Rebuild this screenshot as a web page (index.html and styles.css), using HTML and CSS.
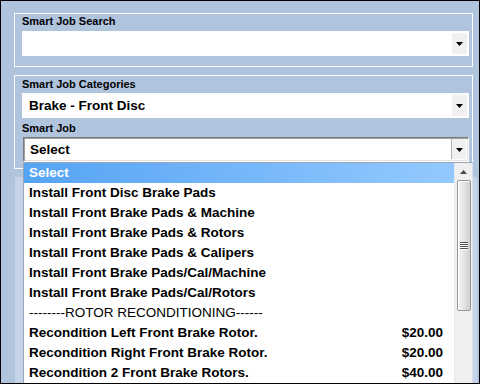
FILE: index.html
```html
<!DOCTYPE html>
<html>
	<head>
		<meta charset="UTF-8">
		<title>Smart Job</title>
		<link rel="stylesheet" href="styles.css">
	</head>
	<body>
		<div class="window">
			<div class="group g1">
				<p class="label">Smart Job Search</p>
				<div class="combo">
					<span class="value"></span>
					<span class="btn"><svg width="7" height="4" viewBox="0 0 7 4"><polygon points="0,0 7,0 3.5,4" fill="#000"/></svg></span>
				</div>
			</div>
			<div class="group g2">
				<p class="label lb1">Smart Job Categories</p>
				<div class="combo">
					<span class="value">Brake - Front Disc</span>
					<span class="btn"><svg width="7" height="4" viewBox="0 0 7 4"><polygon points="0,0 7,0 3.5,4" fill="#000"/></svg></span>
				</div>
				<p class="label lb2">Smart Job</p>
				<div class="combo open">
					<span class="value">Select</span>
					<span class="btn"><svg width="7" height="4" viewBox="0 0 7 4"><polygon points="0,0 7,0 3.5,4" fill="#000"/></svg></span>
				</div>
			</div>
			<div class="panel"></div>

			<!-- dropdown of the Smart Job combo, drawn over the panel -->
			<div class="droplist">
				<ul class="items">
					<li class="sel">Select</li>
					<li>Install Front Disc Brake Pads</li>
					<li>Install Front Brake Pads &amp; Machine</li>
					<li>Install Front Brake Pads &amp; Rotors</li>
					<li>Install Front Brake Pads &amp; Calipers</li>
					<li>Install Front Brake Pads/Cal/Machine</li>
					<li>Install Front Brake Pads/Cal/Rotors</li>
					<li class="sep">--------ROTOR RECONDITIONING------</li>
					<li><span>Recondition Left Front Brake Rotor.</span><span>$20.00</span></li>
					<li><span>Recondition Right Front Brake Rotor.</span><span>$20.00</span></li>
					<li><span>Recondition 2 Front Brake Rotors.</span><span>$40.00</span></li>
				</ul>
				<div class="scroll">
					<div class="up"><svg width="7" height="4" viewBox="0 0 7 4"><polygon points="0,4 7,4 3.5,0" fill="#4a4a4a"/></svg></div>
					<div class="thumb">
						<div class="grip"><i></i><i></i><i></i><i></i></div>
					</div>
				</div>
			</div>
		</div>
	</body>
</html>
```

FILE: styles.css
```css
body{
	margin: 0;
	font-family: "Liberation Sans", Arial, sans-serif;
}
p{
	margin: 0;
}
ul,li{
	padding: 0;
	margin: 0;
	list-style: none;
}
.window{
	position: relative;
	width: 480px;
	height: 384px;
	box-sizing: border-box;
	border: 1px solid #000;
	background: #b0c4de;
	padding: 12px 0 0 13px;
	overflow: hidden;
}
.group{
	width: 459px;
	box-sizing: border-box;
	border: 1px solid #fff;
	padding: 0 0 0 7px;
}
.g1{
	height: 54px;
	margin-bottom: 8px;
}
.g2{
	height: 94px;
}
.label{
	font-size: 11px;
	font-weight: bold;
	line-height: 13px;
	padding-top: 1px;
	margin-bottom: 3px;
	color: #000;
}
.lb1{
	padding-top: 2px;
	margin-bottom: 2px;
}
.lb2{
	padding-top: 4px;
	margin-bottom: 2px;
}
.combo{
	display: flex;
	width: 447px;
	height: 25px;
	box-sizing: border-box;
	padding: 2px;
	background: #fff;
}
.combo .value{
	flex: 1;
	padding-left: 5px;
	font-size: 13.5px;
	font-weight: bold;
	line-height: 21px;
}
.combo .btn{
	display: flex;
	align-items: center;
	justify-content: center;
	width: 15px;
	background: #f0f0f0;
}
.combo.open{
	width: 446px;
	margin-left: 1px;
	padding: 1px 2px 2px 1px;
	border: 1px solid;
	border-color: #7a7a7a #fff #fff #7a7a7a;
	box-shadow: inset 1px 1px 0 #a0a0a0, inset -1px -1px 0 #e3e3e3;
}
.combo.open .value{
	padding-left: 5px;
}
.combo.open .btn{
	width: 14px;
	border-left: 1px solid #b4b4b4;
	padding-top: 2px;
}
.panel{
	width: 462px;
	height: 220px;
	margin: 8px 0 0 1px;
	background: #c6d4e8;
}
.droplist{
	position: absolute;
	left: 22px;
	top: 161px;
	width: 450px;
	height: 240px;
	box-sizing: border-box;
	display: flex;
	border: 1px solid #9aa6b6;
	border-right-color: #d6e0ee;
	background: #fff;
}
.items{
	flex: 1;
}
.items li{
	display: flex;
	justify-content: space-between;
	height: 20px;
	line-height: 20px;
	padding: 0 11px 0 5px;
	font-size: 13.5px;
	font-weight: bold;
	color: #000;
	white-space: nowrap;
}
.items li.sel{
	color: #fff;
	background: linear-gradient(to right, #55a4f4, #94c9ff);
}
.items li.sep{
	font-weight: normal;
}
.scroll{
	width: 17px;
	background: #f0f0f0;
	border-left: 1px solid #e2e8f0;
}
.up{
	height: 17px;
	display: flex;
	align-items: center;
	justify-content: center;
}
.thumb{
	position: relative;
	height: 131px;
	margin: 0 1px 0 2px;
	box-sizing: border-box;
	border: 1px solid #979797;
	border-radius: 2px;
	background: linear-gradient(to right, #f4f4f4, #e6e6e6 45%, #cfcfcf);
	box-shadow: inset 1px 1px 0 #fff;
	display: flex;
	align-items: center;
	justify-content: center;
}
.grip{
	display: flex;
	flex-direction: column;
	gap: 1px;
	width: 8px;
}
.grip i{
	display: block;
	height: 1px;
	background: #555;
	box-shadow: 0 1px 0 #fff;
}
```
